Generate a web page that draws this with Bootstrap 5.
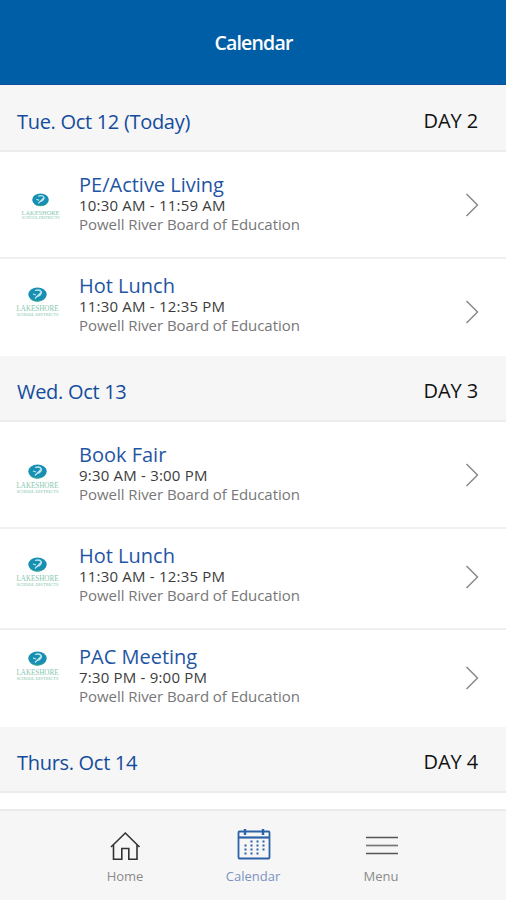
<!DOCTYPE html>
<html lang="en">
<head>
<meta charset="utf-8">
<meta name="viewport" content="width=device-width, initial-scale=1">
<title>Calendar</title>
<link href="https://cdn.jsdelivr.net/npm/bootstrap@5.3.0/dist/css/bootstrap.min.css" rel="stylesheet">
<style>
body{font-family:"Open Sans","Noto Sans",sans-serif;height:900px;overflow:hidden;background:#fff}
.topbar{height:85px;padding:2px 0 0 1px;background:#005ea6;border-bottom:1px solid #0a4f9c;color:#fff;font-size:19.5px;font-weight:600;letter-spacing:-.8px}
.day{height:67px;padding:7px 28px 0 17px;background:#f6f6f6;border-bottom:2px solid #ececec;font-size:20px;letter-spacing:-.1px;color:#111}
.day.mid{height:66px;padding-top:6px}
.day h2{font-size:20px;font-weight:500;margin:0;color:#134c9c;line-height:27px;letter-spacing:-.3px}
.event{height:101px;padding:16px 27px 0 16px;border-bottom:2px solid #efefef;color:inherit}
.event.first{height:107px;padding-top:22px}
.event.last{height:97px;border-bottom:0}
.event .brand{width:63px;flex:none}
.brand svg{display:block;width:43px;height:31px;margin-top:12px}
.brand.low svg{margin-top:20px}
.brand.high svg{margin-top:5px}
.brand.tiny svg{width:39px;height:28px;margin:19px 0 0 5px}
.event h3{font-size:20px;line-height:22px;font-weight:400;margin:0;color:#1f55a3}
.event .time{font-size:15px;line-height:19px;letter-spacing:.2px;color:#3c3c3c}
.event .org{font-size:15px;line-height:18px;letter-spacing:-.05px;color:#777}
.chev{display:block;width:14px;height:24px;margin-top:20px}
.event.first .chev{margin-top:19px}
.event.drop .chev{margin-top:25px}
.tabs{height:91px;background:#f6f6f6;border-top:2px solid #eaecec;padding:17px 61px 0}
.tabs a{width:128px;font-size:13px;line-height:18px;color:#8b8b8b}
.tabs a.on{color:#7b93c0}
.tabs svg{display:block;width:36px;height:36px;margin-bottom:3px}
</style>
<script src="https://cdn.jsdelivr.net/npm/bootstrap@5.3.0/dist/js/bootstrap.bundle.min.js"></script>
</head>
<body class="d-flex flex-column">
<header class="topbar d-flex align-items-center justify-content-center flex-shrink-0">Calendar</header>
<main class="flex-grow-1">
<div class="day d-flex justify-content-between align-items-center"><h2>Tue. Oct 12 (Today)</h2><span>DAY 2</span></div>
<a class="event first d-flex text-decoration-none"><span class="brand tiny"><svg viewBox="0 0 43 31"><g id="logo">
<ellipse cx="21.5" cy="7.5" rx="9.2" ry="7" fill="#168fb2"/>
<path d="M14 11.500Q21 16 29 11.500Q25 14.800 21.500 14.800Q17 14.800 14 11.500Z" fill="#3fae8a"/>
<path d="M19 3.500q5-1.500 6.500 1.500q0 3-4 4.500M25 5.500l-6 6M17 7l3 1" fill="none" stroke="#bfe6ee" stroke-width="1.300"/>
<text x=".5" y="24" textLength="42" lengthAdjust="spacingAndGlyphs" font-family="Liberation Serif,serif" font-size="7.800" fill="#86c6b0">LAKESHORE</text>
<text x=".5" y="29.200" textLength="42" lengthAdjust="spacingAndGlyphs" font-family="Liberation Serif,serif" font-size="5" fill="#86c6b0">SCHOOL DISTRICTS</text>
</g></svg></span><div class="flex-grow-1"><h3>PE/Active Living</h3><div class="time">10:30 AM - 11:59 AM</div><div class="org">Powell River Board of Education</div></div><svg class="chev" viewBox="0 0 14 24"><path id="next" d="M1.500 1L12.500 12L1.500 23" fill="none" stroke="#8a8a8a" stroke-width="1.500"/></svg></a>
<a class="event last drop d-flex text-decoration-none"><span class="brand"><svg viewBox="0 0 43 31"><use href="#logo"/></svg></span><div class="flex-grow-1"><h3>Hot Lunch</h3><div class="time">11:30 AM - 12:35 PM</div><div class="org">Powell River Board of Education</div></div><svg class="chev"><use href="#next"/></svg></a>
<div class="day mid d-flex justify-content-between align-items-center"><h2>Wed. Oct 13</h2><span>DAY 3</span></div>
<a class="event first d-flex text-decoration-none"><span class="brand low"><svg viewBox="0 0 43 31"><use href="#logo"/></svg></span><div class="flex-grow-1"><h3>Book Fair</h3><div class="time">9:30 AM - 3:00 PM</div><div class="org">Powell River Board of Education</div></div><svg class="chev"><use href="#next"/></svg></a>
<a class="event d-flex text-decoration-none"><span class="brand"><svg viewBox="0 0 43 31"><use href="#logo"/></svg></span><div class="flex-grow-1"><h3>Hot Lunch</h3><div class="time">11:30 AM - 12:35 PM</div><div class="org">Powell River Board of Education</div></div><svg class="chev"><use href="#next"/></svg></a>
<a class="event last d-flex text-decoration-none"><span class="brand high"><svg viewBox="0 0 43 31"><use href="#logo"/></svg></span><div class="flex-grow-1"><h3>PAC Meeting</h3><div class="time">7:30 PM - 9:00 PM</div><div class="org">Powell River Board of Education</div></div><svg class="chev"><use href="#next"/></svg></a>
<div class="day mid d-flex justify-content-between align-items-center"><h2>Thurs. Oct 14</h2><span>DAY 4</span></div>
</main>
<nav class="tabs d-flex flex-shrink-0">
<a class="d-flex flex-column align-items-center text-decoration-none"><svg viewBox="0 0 36 36" fill="none" stroke="#333" stroke-width="1.600"><path d="M4 19L18.300 5L32.500 19"/><path d="M6.500 17V31.200H14.800V20.500H21.800V31.200H30V17"/></svg>Home</a>
<a class="on d-flex flex-column align-items-center text-decoration-none"><svg viewBox="0 0 36 36" fill="none" stroke="#2c62a8" stroke-width="1.800"><rect x="3.500" y="3.500" width="31" height="27" rx="1"/><path d="M3 9.500H34" stroke-width="2.200"/><path d="M10 1V7M28 1V7" stroke-width="2.400"/><path d="M15.500 13.500H30M9.500 17.500H30M9.500 21.500H30M9.500 25.500H24" stroke-width="2" stroke-dasharray="2 4"/></svg>Calendar</a>
<a class="d-flex flex-column align-items-center text-decoration-none"><svg viewBox="0 0 36 36" fill="none" stroke="#555" stroke-width="1.700"><path d="M3 9.500H35M3 25.500H35"/><path d="M3 17.500H35" stroke="#777"/></svg>Menu</a>
</nav>
</body>
</html>
